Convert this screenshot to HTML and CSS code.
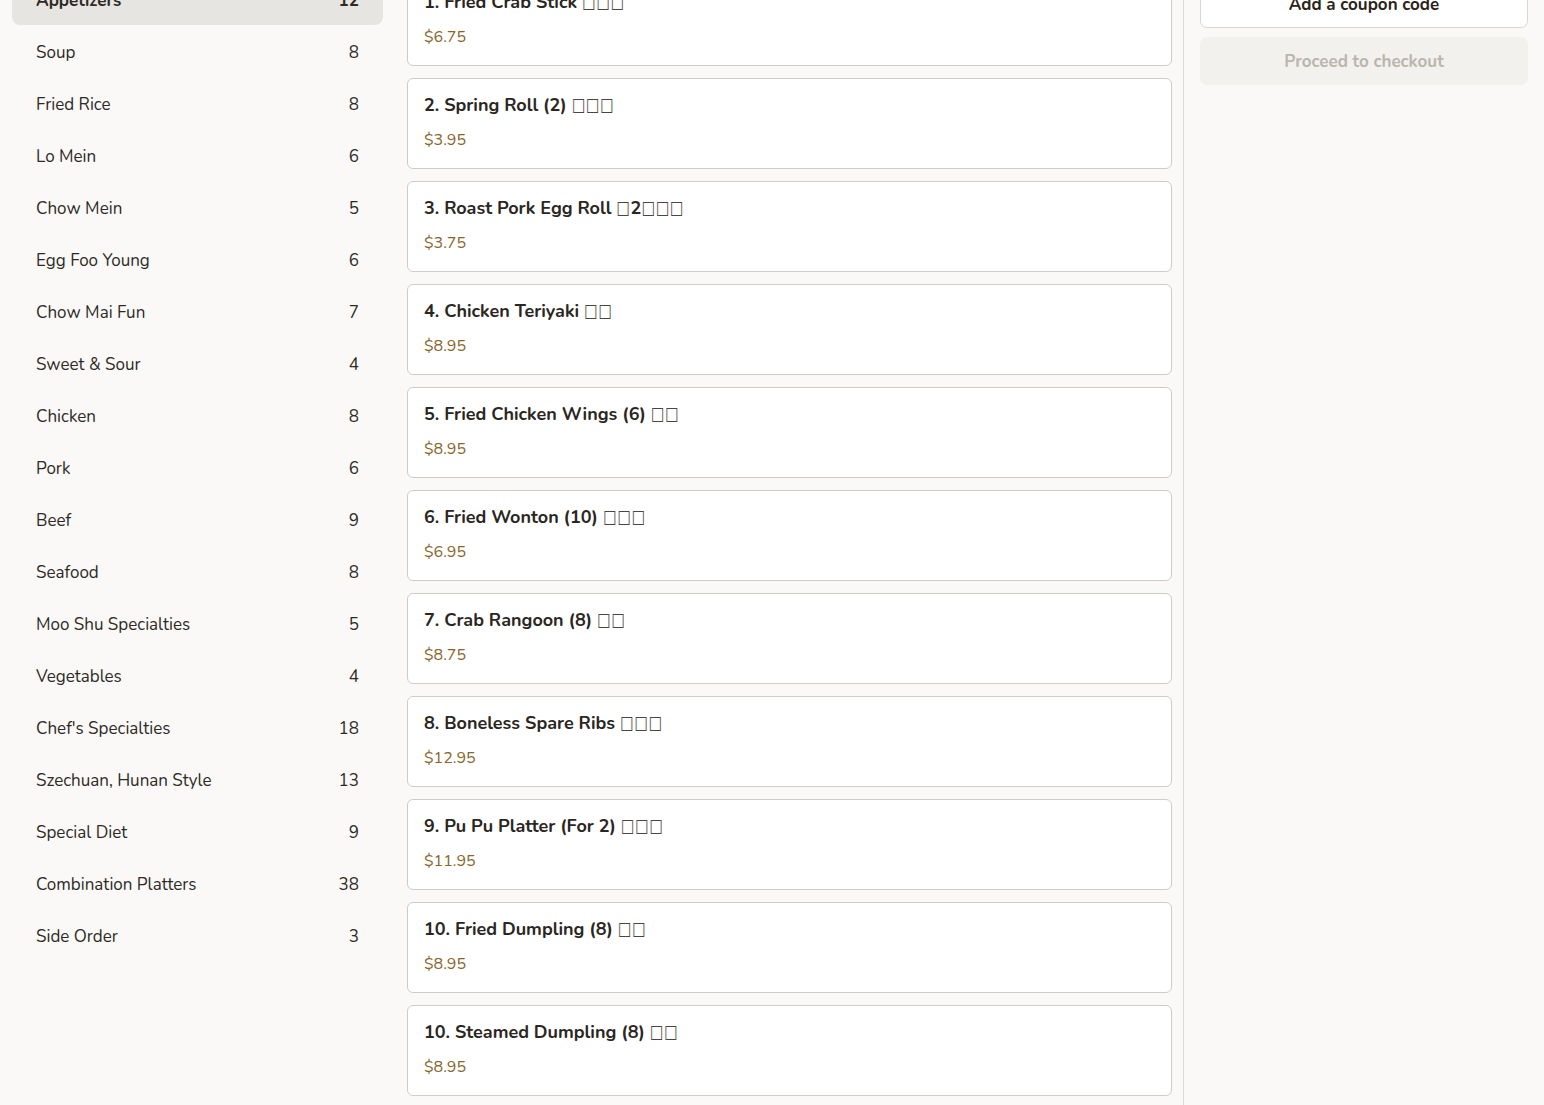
FILE: index.html
```html
<!DOCTYPE html>
<html lang="en">
<head>
<meta charset="utf-8">
<title>Menu</title>
<link rel="stylesheet" href="styles.css">
</head>
<body>
<div class="page">
  <aside class="sidebar">
    <ul class="cats">
      <li class="cat active"><span>Appetizers</span><span>12</span></li>
      <li class="cat"><span>Soup</span><span>8</span></li>
      <li class="cat"><span>Fried Rice</span><span>8</span></li>
      <li class="cat"><span>Lo Mein</span><span>6</span></li>
      <li class="cat"><span>Chow Mein</span><span>5</span></li>
      <li class="cat"><span>Egg Foo Young</span><span>6</span></li>
      <li class="cat"><span>Chow Mai Fun</span><span>7</span></li>
      <li class="cat"><span>Sweet &amp; Sour</span><span>4</span></li>
      <li class="cat"><span>Chicken</span><span>8</span></li>
      <li class="cat"><span>Pork</span><span>6</span></li>
      <li class="cat"><span>Beef</span><span>9</span></li>
      <li class="cat"><span>Seafood</span><span>8</span></li>
      <li class="cat"><span>Moo Shu Specialties</span><span>5</span></li>
      <li class="cat"><span>Vegetables</span><span>4</span></li>
      <li class="cat"><span>Chef's Specialties</span><span>18</span></li>
      <li class="cat"><span>Szechuan, Hunan Style</span><span>13</span></li>
      <li class="cat"><span>Special Diet</span><span>9</span></li>
      <li class="cat"><span>Combination Platters</span><span>38</span></li>
      <li class="cat"><span>Side Order</span><span>3</span></li>
    </ul>
  </aside>
  <main class="items">
    <div class="card"><div class="name">1. Fried Crab Stick <span class="cjk">□□□</span></div><div class="price">$6.75</div></div>
    <div class="card"><div class="name">2. Spring Roll (2) <span class="cjk">□□□</span></div><div class="price">$3.95</div></div>
    <div class="card"><div class="name">3. Roast Pork Egg Roll <span class="cjk">□</span>2<span class="cjk">□□□</span></div><div class="price">$3.75</div></div>
    <div class="card"><div class="name">4. Chicken Teriyaki <span class="cjk">□□</span></div><div class="price">$8.95</div></div>
    <div class="card"><div class="name">5. Fried Chicken Wings (6) <span class="cjk">□□</span></div><div class="price">$8.95</div></div>
    <div class="card"><div class="name">6. Fried Wonton (10) <span class="cjk">□□□</span></div><div class="price">$6.95</div></div>
    <div class="card"><div class="name">7. Crab Rangoon (8) <span class="cjk">□□</span></div><div class="price">$8.75</div></div>
    <div class="card"><div class="name">8. Boneless Spare Ribs <span class="cjk">□□□</span></div><div class="price">$12.95</div></div>
    <div class="card"><div class="name">9. Pu Pu Platter (For 2) <span class="cjk">□□□</span></div><div class="price">$11.95</div></div>
    <div class="card"><div class="name">10. Fried Dumpling (8) <span class="cjk">□□</span></div><div class="price">$8.95</div></div>
    <div class="card"><div class="name">10. Steamed Dumpling (8) <span class="cjk">□□</span></div><div class="price">$8.95</div></div>
  </main>
  <aside class="cart">
    <button class="btn coupon">Add a coupon code</button>
    <button class="btn checkout" disabled>Proceed to checkout</button>
  </aside>
</div>
</body>
</html>
```
FILE: styles.css
```css
* { box-sizing: border-box; }
html, body { margin: 0; padding: 0; }
body {
  background: #faf9f7;
  font-family: "Nunito", Lato, "Open Sans", sans-serif;
  color: #2a2622;
  overflow: hidden;
  height: 1105px;
}
.page {
  display: flex;
  align-items: flex-start;
  margin-top: -27px;
  height: 1200px;
}
.sidebar {
  width: 371px;
  margin-left: 12px;
  flex: none;
}
.cats { list-style: none; margin: 0; padding: 0; }
.cat {
  display: flex;
  justify-content: space-between;
  align-items: center;
  height: 52px;
  padding: 3px 24px 0;
  font-size: 17px;
  color: #2d2a26;
  border-radius: 8px;
}
.cat.active {
  background: #e6e5e1;
  font-weight: 700;
}
.items {
  width: 765px;
  margin-left: 24px;
  padding-top: 2px;
  display: flex;
  flex-direction: column;
  gap: 12px;
  flex: none;
}
.card {
  background: #fff;
  border: 1px solid #cfccc8;
  border-radius: 6px;
  height: 91px;
  padding: 14px 16px 0;
}
.name {
  font-size: 18px;
  font-weight: 700;
  color: #2a2622;
  line-height: 24px;
  height: 24px;
  white-space: nowrap;
}
.cjk {
  display: inline-block;
  font-family: "DejaVu Sans", sans-serif;
  font-weight: 400;
  font-size: 14px;
  line-height: 14px;
  letter-spacing: 1px;
  color: #4a4642;
  transform: scaleY(1.3);
  transform-origin: 50% 80%;
}
.price {
  margin-top: 13px;
  font-size: 16px;
  color: #86662a;
  line-height: 20px;
}
.cart {
  margin-left: 11px;
  border-left: 1px solid #dcdad6;
  padding: 7px 16px 0;
  width: 361px;
  height: 1200px;
  flex: none;
  display: flex;
  flex-direction: column;
  gap: 9px;
}
.btn {
  font-family: inherit;
  font-size: 17px;
  font-weight: 700;
  height: 48px;
  border-radius: 7px;
  width: 100%;
}
.coupon {
  background: #fff;
  border: 1px solid #d8d6d2;
  color: #2a2418;
}
.checkout {
  background: #f2f1ee;
  border: none;
  color: #b9b6af;
}
```
